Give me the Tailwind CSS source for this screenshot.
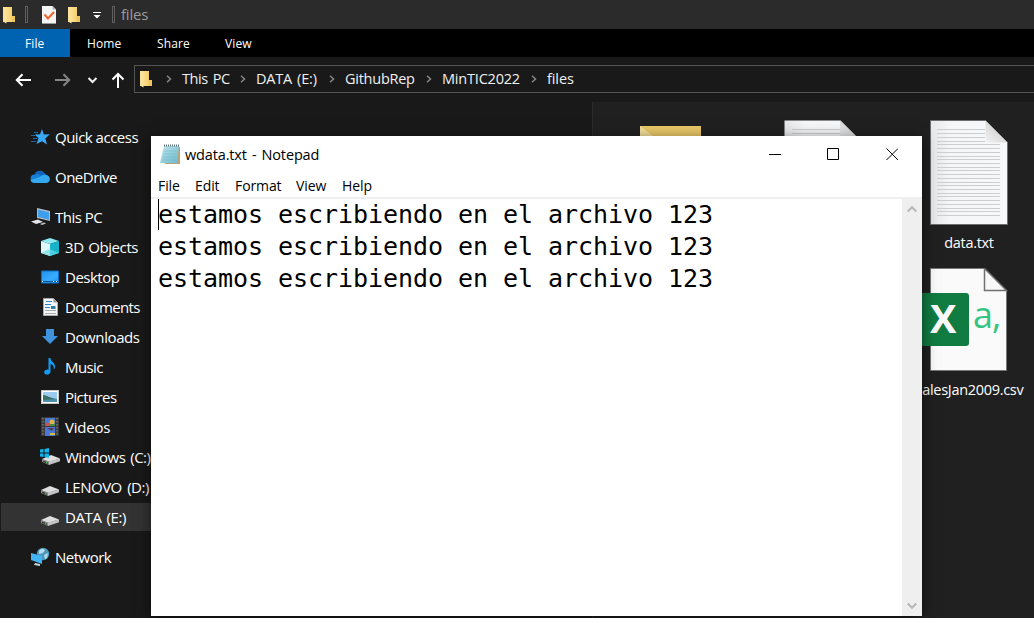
<!DOCTYPE html>
<html lang="en">
<head>
<meta charset="utf-8">
<title>files</title>
<script src="https://cdn.jsdelivr.net/npm/@tailwindcss/browser@4"></script>
</head>
<body class="w-[1034px] h-[623px] overflow-hidden bg-white font-['Open_Sans','Noto_Sans',sans-serif] text-[15px] text-white whitespace-nowrap">
<svg class="absolute w-0 h-0">
  <defs>
    <linearGradient id="gFold" x1="0" x2="1"><stop offset="0" stop-color="#ffe9a2"/><stop offset="1" stop-color="#f5cf6c"/></linearGradient>
    <linearGradient id="gBlue" x1="0" y1="0" x2="1" y2="1"><stop offset="0" stop-color="#1e90ea"/><stop offset=".6" stop-color="#39adff"/><stop offset="1" stop-color="#1795f5"/></linearGradient>
    <linearGradient id="gPage" x1="0" x2="1"><stop offset="0" stop-color="#e6e7e9"/><stop offset=".25" stop-color="#f5f6f8"/><stop offset="1" stop-color="#f6f8fa"/></linearGradient>
    <linearGradient id="gCurl" x1="0" y1="1" x2="1" y2="0"><stop offset="0" stop-color="#f2f2f2"/><stop offset="1" stop-color="#c2c2c4"/></linearGradient>
    <linearGradient id="gPad" x1="0" y1="0" x2="1" y2="1"><stop offset="0" stop-color="#bfe6ee"/><stop offset="1" stop-color="#6db9cb"/></linearGradient>
    <symbol id="folder" viewBox="0 0 13 18"><path d="M1 1h8v9h3v6H1z" fill="#f0c65f"/><path d="M0 1h9v15H0z" fill="url(#gFold)"/><path d="M0 1l3.500 2v14.500L0 15.500z" fill="#fbe29a"/></symbol>
    <symbol id="chev" viewBox="0 0 6 8"><path d="M1 .7L4.500 4 1 7.300" fill="none" stroke="#868686" stroke-width="1.500"/></symbol>
    <symbol id="drive" viewBox="0 0 18 11"><path d="M0 5L9 1l9 3.500-11 3.500z" fill="#dededf"/><path d="M0 5l7 2.500V11L0 8z" fill="#8d8d8f"/><path d="M7 7.500l11-3v2.700L7 11z" fill="#c3c3c6"/><path d="M1 6.500l5 2v1.500l-5-2z" fill="#363638"/><path d="M4 8l1.500.6v1L4 9z" fill="#45d845"/></symbol>
  </defs>
</svg>
<div class="relative flex flex-col w-[1034px] h-[618px] bg-[#191919] overflow-hidden">
  <header class="flex items-center h-[29px] shrink-0 bg-[#2b2b2b] pl-[3px]">
    <svg class="w-[13px] h-[18px]"><use href="#folder"/></svg>
    <i class="block w-[3px] h-[17px] ml-[9px] border border-[#5f5f5f]"></i>
    <svg class="w-[14px] h-[18px] ml-[14px]" viewBox="0 0 14 18"><path d="M0 0h10.500l3.500 3.500V18H0z" fill="#f4f4f5"/><path d="M10.500 0v3.500H14z" fill="#b7b7b7"/><path d="M0 17.500h14" stroke="#999"/><path d="M2.500 8.500l3.500 4 6-6.500" fill="none" stroke="#f0642b" stroke-width="2"/></svg>
    <svg class="w-[13px] h-[18px] ml-[12px]"><use href="#folder"/></svg>
    <svg class="w-[8px] h-[7px] ml-[12px] mt-[2px]" viewBox="0 0 8 7"><path d="M0 .5h8" stroke="#fff"/><path d="M.5 3h7L4 6.500z" fill="#fff"/></svg>
    <i class="block w-[3px] h-[17px] ml-[11px] border border-[#5f5f5f]"></i>
    <span class="ml-[6px] text-[#9b9b9b] tracking-[-0.2px]">files</span>
  </header>
  <nav class="flex h-[28px] shrink-0 bg-black text-[12px] leading-[29px] tracking-[0.1px]">
    <span class="w-[70px] pl-[25px] bg-[#0063b1]">File</span>
    <span class="w-[70px] pl-[17px]">Home</span>
    <span class="w-[68px] pl-[17px]">Share</span>
    <span class="pl-[17px]">View</span>
  </nav>
  <div class="flex h-[45px] shrink-0 items-center">
    <svg class="w-[134px] h-[45px] shrink-0" viewBox="0 0 134 45" fill="none" stroke-width="2"><path d="M31 23H17M22.500 17.300L16.800 23l5.700 5.700" stroke="#fff"/><path d="M55 23h14M63.500 17.300L69.200 23l-5.700 5.700" stroke="#858585"/><path d="M88.500 21l4 4 4-4" stroke="#f0f0f0"/><path d="M118 31V17M112.500 22.500L118 17l5.500 5.500" stroke="#fff"/></svg>
    <div class="flex items-center w-[910px] h-[28px] -mt-px shrink-0 border border-[#535353] pl-[5px] text-[14.500px] text-[#f0f0f0]">
      <svg class="w-[13px] h-[18px]"><use href="#folder"/></svg>
      <svg class="w-[6px] h-[8px] ml-[13px]"><use href="#chev"/></svg><span class="w-[48px] ml-[10px] tracking-[-0.4px] [word-spacing:1.500px]">This PC</span>
      <svg class="w-[6px] h-[8px] ml-[10px]"><use href="#chev"/></svg><span class="w-[62px] ml-[10px] tracking-[-0.2px] [word-spacing:1.500px]">DATA (E:)</span>
      <svg class="w-[6px] h-[8px] ml-[11px]"><use href="#chev"/></svg><span class="w-[70px] ml-[10px] tracking-[-0.25px]">GithubRep</span>
      <svg class="w-[6px] h-[8px] ml-[11px]"><use href="#chev"/></svg><span class="w-[78px] ml-[10px] tracking-[-0.2px]">MinTIC2022</span>
      <svg class="w-[6px] h-[8px] ml-[11px]"><use href="#chev"/></svg><span class="ml-[10px] tracking-[-0.1px]">files</span>
    </div>
  </div>
  <div class="flex flex-1">
    <aside class="w-[592px] pt-[20px] leading-[30px] tracking-[-0.5px]">
      <div class="flex items-center h-[30px] pl-[30px] mb-[10px]"><svg class="w-5 h-5 mr-[5px]" viewBox="0 0 20 20"><path d="M12 2l1.800 5.500 6-.2-4.500 4.200L17 17.500l-5-3.200L6.500 17l2-5.700L4.800 7.500l5.200-.2z" fill="#39a8f5"/><path d="M4 5.500h4M1 8.500h4M3 11.500h4M1 14.500h5" stroke="#1769a8"/></svg><span>Quick access</span></div>
      <div class="flex items-center h-[30px] pl-[30px] mb-[10px]"><svg class="w-5 h-5 mr-[5px]" viewBox="0 0 20 20"><path d="M5 6a6 6 0 0 1 10.500 2L8 13z" fill="#1064b9"/><path d="M4 7.500c3-1.500 6 0 9 3L5 16a4.300 4.300 0 0 1-1-8.500z" fill="#1480d8"/><path d="M10 10c3-3 6-3 7.500-1.500 3 1 3.500 7-1 7.500H5c-2 0-4-1-4.500-3z" fill="#32a9ee"/></svg><span>OneDrive</span></div>
      <div class="flex items-center h-[30px] pl-[30px]"><svg class="w-5 h-5 mr-[5px]" viewBox="0 0 20 20"><path d="M7 1l13 3v10L7 11z" fill="#b8bdc2"/><path d="M8 2.500l11 2.700v7.500L8 10z" fill="#3e9eec"/><path d="M1 14.500l7-2 5 2.500-7 2z" fill="#e4e6e9"/><path d="M10 17l4-1.500 2 1-4 1.500z" fill="#bfc3c7"/></svg><span>This PC</span></div>
      <div class="flex items-center h-[30px] pl-[40px]"><svg class="w-5 h-5 mr-[5px]" viewBox="0 0 20 20"><path d="M1 4l9-3 9 3-9 3z" fill="#8ceaf2"/><path d="M1 4l9 3v12l-9-3z" fill="#dcf7fa"/><path d="M10 7l9-3v12l-9 3z" fill="#18b2cc"/><path d="M1 16l9-4v7z" fill="#93e3ea"/><path d="M19 16l-9-4v7z" fill="#4dcfde"/></svg><span class="tracking-[-0.4px] [word-spacing:1px]">3D Objects</span></div>
      <div class="flex items-center h-[30px] pl-[40px]"><svg class="w-5 h-5 mr-[5px]" viewBox="0 0 20 20"><path d="M1.500 4h17v12h-17z" fill="url(#gBlue)" stroke="#0872c9"/><path d="M2 14.500h16" stroke="#0d5797"/><path d="M2 14.500h1M13 14.500h1M16 14.500h1" stroke="#fff"/></svg><span>Desktop</span></div>
      <div class="flex items-center h-[30px] pl-[40px]"><svg class="w-5 h-5 mr-[5px]" viewBox="0 0 20 20"><path d="M3.500 1.500h10l4 4v13h-14z" fill="#f6f6f6" stroke="#aaa"/><path d="M13.500 1.500v4h4z" fill="#999"/><path d="M6 4.500h6M5 7.500h6M5 10.500h5" stroke="#1c87d5"/><path d="M11 9h4.500v3H11z" fill="#347f9d"/><path d="M5 13.500h11M5 16.500h11" stroke="#aaa"/></svg><span class="tracking-[-0.6px]">Documents</span></div>
      <div class="flex items-center h-[30px] pl-[40px]"><svg class="w-5 h-5 mr-[5px]" viewBox="0 0 20 20"><path d="M6 2h8v7h4l-8 8-8-8h4z" fill="#3f93de"/></svg><span class="tracking-[-0.4px]">Downloads</span></div>
      <div class="flex items-center h-[30px] pl-[40px]"><svg class="w-5 h-5 mr-[5px]" viewBox="0 0 20 20"><path d="M8.500 1h2c0 4 5 4.500 4.500 9-.2 1.700-1 2.500-1.300 2.500.5-3-.7-4.500-3.200-5.500v7.500c0 4-6.300 4-6.300.8 0-2.300 2.300-3 4.300-2.600z" fill="#109df7"/></svg><span class="tracking-[-0.6px]">Music</span></div>
      <div class="flex items-center h-[30px] pl-[40px]"><svg class="w-5 h-5 mr-[5px]" viewBox="0 0 20 20"><path d="M1 3h18v14H1z" fill="#c7c7c7"/><path d="M2 4h16v12H2z" fill="#fff"/><path d="M3 5h14v10H3z" fill="#9dcaf0"/><path d="M3 8c4 0 6 3 14 4v3H3z" fill="#387163"/><path d="M3 13l14-1v3H3z" fill="#4c91b0"/></svg><span class="tracking-[-0.6px]">Pictures</span></div>
      <div class="flex items-center h-[30px] pl-[40px]"><svg class="w-5 h-5 mr-[5px]" viewBox="0 0 20 20"><path d="M1 0h18v19H1z" fill="#3a3a3c"/><path d="M5 1h10v8H5zM5 10h10v9H5z" fill="#4879d8"/><circle cx="12" cy="5" r="2.500" fill="#e2b33d"/><path d="M5 6h4v3H5z" fill="#c94f59"/><path d="M10 7h5v2h-5z" fill="#438d45"/><path d="M7 11h7l-2 3z" fill="#563951"/><path d="M10 16h5v2h-5z" fill="#d7b837"/><path d="M3 1v18M17 1v18" stroke="#737373" stroke-width="1.500" stroke-dasharray="1.500 1.500"/></svg><span class="tracking-[-0.2px]">Videos</span></div>
      <div class="flex items-center h-[30px] pl-[40px]"><svg class="w-5 h-5 mr-[5px]" viewBox="0 0 20 20"><use href="#drive" x="2" y="7" width="18" height="11"/><path d="M0 2.500l3.500-.5v3.500H0zM4.500 2L9 1v4.500H4.500zM0 6.500h3.500V10L0 9.500zM4.500 6.500H9V11l-4.500-1z" fill="#12b5ee"/></svg><span class="[word-spacing:1.500px]">Windows (C:)</span></div>
      <div class="flex items-center h-[30px] pl-[40px]"><svg class="w-5 h-5 mr-[5px]" viewBox="0 0 20 20"><use href="#drive" x="1" y="8" width="18" height="11"/></svg><span class="[word-spacing:2px]">LENOVO (D:)</span></div>
      <div class="flex items-center h-[28px] my-px ml-px pl-[39px] bg-[#333]"><svg class="w-5 h-5 mr-[5px]" viewBox="0 0 20 20"><use href="#drive" x="1" y="8" width="18" height="11"/></svg><span class="tracking-[-0.4px] [word-spacing:1.500px]">DATA (E:)</span></div>
      <div class="flex items-center h-[30px] pl-[30px] mt-[11px]"><svg class="w-5 h-5 mr-[5px]" viewBox="0 0 20 20"><circle cx="13" cy="7" r="6.200" fill="#4b98bb"/><path d="M9 4q3-4 6-1l-2 3-4 1zM14 8l4-2-1 5-2 1z" fill="#b5dceb"/><path d="M1 6l11 3v8L1 13z" fill="#41b5f5"/><path d="M5 16l5 1v2l-6-1z" fill="#c7d3da"/></svg><span>Network</span></div>
    </aside>
    <main class="relative flex-1 bg-[#202020] border-l border-[#2b2b2b]">
      <svg class="absolute left-[46px] top-[23px] w-[64px] h-[50px]" viewBox="0 0 64 50"><path d="M1 1h61v49H1z" fill="#e9c868"/><path d="M1 1l18 14H1z" fill="#f5df9b"/></svg>
      <svg class="absolute left-[191px] top-[18px] w-[79px] h-[104px]" viewBox="0 0 79 104"><path d="M.5.500h56l22 22v81H.5z" fill="url(#gPage)"/><path d="M8 9.500h48M8 13.500h48" stroke="#cfcfcf"/><path d="M56 .5v22h22z" fill="url(#gCurl)"/></svg>
      <div class="absolute left-[298px] top-[18px] w-[156px] flex flex-col items-center tracking-[-0.4px] text-[14.500px]">
        <svg class="w-[78px] h-[105px] mr-px" viewBox="0 0 78 105"><path d="M.5.500h55l22 22v82H.5z" fill="url(#gPage)" stroke="#6d6d6f"/><path d="M7 9.500h48M7 13.500h48M7 17.500h48M7 21.500h48M7 24.500h63M7 28.500h63M7 32.500h63M7 36.500h63M7 39.500h63M7 43.500h63M7 47.500h63M7 50.500h63M7 54.500h63M7 58.500h63M7 62.500h63M7 65.500h63M7 69.500h63M7 73.500h63M7 76.500h63M7 80.500h63M7 84.500h63M7 88.500h63M7 91.500h63M7 95.500h63" stroke="#cdced0"/><path d="M55.500.500v22h22z" fill="url(#gCurl)"/></svg>
        <span class="mt-[7px] h-[20px] leading-[22px] tracking-[-0.3px]">data.txt</span>
        <svg class="w-[92px] h-[104px] mt-[16px] mr-[14px]" viewBox="0 0 92 104"><path d="M14.500.500h54l22 22v80h-76z" fill="#fafafa" stroke="#77777a"/><path d="M68.500.500v22h22z" fill="#f8f8f8" stroke="#707072" stroke-width="1.500"/><rect x="0" y="25" width="53" height="53" rx="3" fill="#107c41"/><text x="27" y="64.500" text-anchor="middle" font-family="Open Sans" font-size="39" font-weight="700" fill="#fafafa" textLength="26" lengthAdjust="spacingAndGlyphs">X</text><text x="57" y="60" font-family="Open Sans" font-size="36" letter-spacing="-1" fill="#33c481">a,</text></svg>
        <span class="mt-[7px] h-[20px] leading-[22px] tracking-[-0.3px]">SalesJan2009.csv</span>
      </div>
    </main>
  </div>
  <section class="absolute left-[151px] top-[136px] w-[771px] h-[480px] flex flex-col bg-white text-black shadow-[0_3px_14px_rgba(0,0,0,0.55)]">
    <div class="flex h-[36px] items-center pl-[9px]">
      <svg class="w-[21px] h-[21px]" viewBox="0 0 21 21"><path d="M17 3h3v17H5l-1-2z" fill="#b9a27a"/><path d="M4 2h15l-2 17H0z" fill="url(#gPad)"/><path d="M4 7h13M3.500 10h13M3 13h13M2.500 16h13" stroke="#6fb3c7" stroke-width=".5"/><path d="M4 1.500h15" stroke="#60737b" stroke-width="2" stroke-dasharray="1 1"/></svg>
      <span class="ml-[4px] w-[140px] pt-[2px] text-[14.500px] tracking-[-0.15px] [word-spacing:1.500px]">wdata.txt - Notepad</span>
      <svg class="w-[130px] h-[13px] ml-[443px]" viewBox="0 0 130 13" fill="none" stroke="#000"><path d="M1 6.500h12"/><path d="M59.500.500h11v11h-11z"/><path d="M118.500.500l11.500 11.500m0-11.500l-11.500 11.500"/></svg>
    </div>
    <div class="flex h-[25px] pl-[7px] leading-[27px] text-[14px] tracking-[-0.1px]">
      <span class="w-[37px]">File</span><span class="w-[40px]">Edit</span><span class="w-[61px]">Format</span><span class="w-[46px]">View</span><span>Help</span>
    </div>
    <div class="flex flex-1 border-t-2 border-[#efefef]">
      <div class="relative flex-1 pl-[7px] font-['DejaVu_Sans_Mono',monospace] text-[25px] leading-[32px] tracking-[-0.05px]">
        <i class="absolute left-[7px] top-0 w-px h-[31px] bg-black"></i>
        <p>estamos escribiendo en el archivo 123</p>
        <p>estamos escribiendo en el archivo 123</p>
        <p>estamos escribiendo en el archivo 123</p>
      </div>
      <div class="w-[20px] flex flex-col justify-between items-center bg-[#efefef] py-[6px]">
        <svg class="w-[10px] h-[8px] mr-px" viewBox="0 0 10 8"><path d="M.7 6.500L5 2.200l4.300 4.300" fill="none" stroke="#b8b8b8" stroke-width="2"/></svg>
        <svg class="w-[10px] h-[8px] mr-px" viewBox="0 0 10 8"><path d="M.7 1.500L5 5.800l4.300-4.300" fill="none" stroke="#b8b8b8" stroke-width="2"/></svg>
      </div>
    </div>
  </section>
</div>
</body>
</html>
